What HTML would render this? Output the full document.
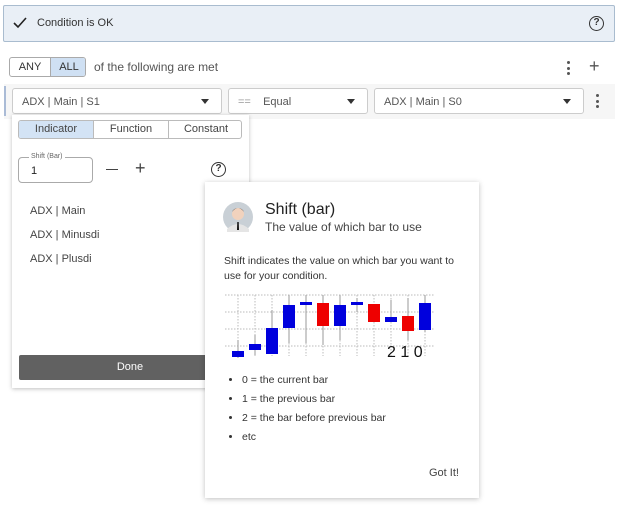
<!DOCTYPE html><html><head><style>
*{box-sizing:border-box}body{margin:0;width:619px;height:510px;background:#fff;font-family:"Liberation Sans",sans-serif;position:relative;overflow:hidden;color:#333}
.a{position:absolute}
.sel{position:absolute;border:1px solid #ccc;border-radius:3px;background:#fff;font-size:11px;color:#555;padding:7px 9px}
.car{position:absolute;right:12px;top:10px;width:0;height:0;border-left:4px solid transparent;border-right:4px solid transparent;border-top:5px solid #333}
.q{position:absolute;width:15px;height:15px;border:1.6px solid #333;border-radius:50%;font-size:10px;font-weight:bold;text-align:center;line-height:12px}
.dots{position:absolute;width:3px}
.dots i{display:block;width:3px;height:3px;background:#555;border-radius:50%;margin-bottom:2.5px}
</style></head><body>
<div class="a" style="left:3px;top:5px;width:612px;height:37px;background:#e9eff6;border:1px solid #a9bccf;border-radius:2px"></div>
<svg class="a" style="left:13px;top:17px" width="14" height="12"><path d="M1 6 L5 10 L13 1" stroke="#222" stroke-width="1.6" fill="none"/></svg>
<div class="a" style="left:37px;top:17px;font-size:11px;color:#333">Condition is OK</div>
<div class="q" style="left:589px;top:16px">?</div>

<div class="a" style="left:9px;top:57px;width:77px;height:20px;border:1px solid #aaa;border-radius:3px;overflow:hidden;font-size:11px">
<div class="a" style="left:0;top:0;width:40px;height:18px;line-height:18px;text-align:center;color:#333">ANY</div>
<div class="a" style="left:40px;top:0;width:37px;height:18px;line-height:18px;text-align:center;background:#cfe0f3;border-left:1px solid #aaa;color:#333">ALL</div></div>
<div class="a" style="left:94px;top:60px;font-size:12px;color:#555">of the following are met</div>
<div class="dots" style="left:567px;top:61px"><i></i><i></i><i></i></div>
<div class="a" style="left:589px;top:56px;font-size:18px;color:#555">+</div>

<div class="a" style="left:4px;top:84px;width:611px;height:35px;background:#f6f6f6"></div>
<div class="a" style="left:4px;top:86px;width:2px;height:30px;background:#aabbd6"></div>
<div class="sel" style="left:12px;top:88px;width:210px;height:26px">ADX | Main | S1<div class="car"></div></div>
<div class="sel" style="left:228px;top:88px;width:140px;height:26px"><span style="color:#999">==</span>&nbsp;&nbsp;&nbsp;&nbsp;Equal<div class="car"></div></div>
<div class="sel" style="left:374px;top:88px;width:210px;height:26px">ADX | Main | S0<div class="car"></div></div>
<div class="dots" style="left:596px;top:94px"><i></i><i></i><i></i></div>

<div class="a" style="left:12px;top:115px;width:237px;height:273px;background:#fff;box-shadow:0 1px 4px rgba(0,0,0,.25)"></div>
<div class="a" style="left:18px;top:120px;width:224px;height:19px;border:1px solid #bbb;border-radius:3px;overflow:hidden;font-size:11px;color:#444">
<div class="a" style="left:0;width:74px;height:17px;line-height:17px;text-align:center;background:#d3e3f5">Indicator</div>
<div class="a" style="left:74px;width:75px;height:17px;line-height:17px;text-align:center;border-left:1px solid #bbb">Function</div>
<div class="a" style="left:149px;width:75px;height:17px;line-height:17px;text-align:center;border-left:1px solid #bbb">Constant</div></div>
<div class="a" style="left:18px;top:157px;width:75px;height:26px;border:1px solid #aaa;border-radius:4px"></div>
<div class="a" style="left:29px;top:153px;font-size:7px;color:#666;background:#fff;padding:0 2px">Shift (Bar)</div>
<div class="a" style="left:31px;top:165px;font-size:11px;color:#222">1</div>
<div class="a" style="left:106px;top:169px;width:12px;height:1px;background:#444"></div>
<div class="a" style="left:135px;top:158px;font-size:18px;color:#444">+</div>
<div class="q" style="left:211px;top:162px">?</div>
<div class="a" style="left:30px;top:199px;font-size:11px;color:#444;line-height:24px">ADX | Main<br>ADX | Minusdi<br>ADX | Plusdi</div>
<div class="a" style="left:19px;top:355px;width:222px;height:25px;background:#616161;border-radius:2px;color:#fff;font-size:11px;text-align:center;line-height:25px">Done</div>

<div class="a" style="left:205px;top:182px;width:274px;height:316px;background:#fff;box-shadow:0 1px 5px rgba(0,0,0,.25)"></div>
<svg class="a" style="left:222px;top:201px" width="32" height="32"><circle cx="16" cy="16" r="15" fill="#c9d0d6"/><circle cx="16" cy="13" r="6" fill="#f1d2bd"/><path d="M10 11 Q16 3 22 11 Q20 7 16 7 Q12 7 10 11Z" fill="#3a3a3a"/><path d="M5 28 Q16 18 27 28 L27 31 L5 31Z" fill="#e5e5e5"/><path d="M15.3 21 L16.7 21 L17 29 L15 29Z" fill="#111"/></svg>
<div class="a" style="left:265px;top:201px;font-size:16px;color:#222">Shift (bar)</div>
<div class="a" style="left:265px;top:220px;font-size:12px;color:#444">The value of which bar to use</div>
<div class="a" style="left:224px;top:254px;font-size:10.5px;color:#333;line-height:15px;width:245px">Shift indicates the value on which bar you want to use for your condition.</div>
<svg class="a" style="left:220px;top:290px" width="220" height="72">
<g stroke="#bbb" stroke-width="1" stroke-dasharray="1.5,1.5">
<line x1="5" y1="5" x2="215" y2="5"/><line x1="5" y1="22" x2="215" y2="22"/><line x1="5" y1="39" x2="215" y2="39"/><line x1="5" y1="56" x2="215" y2="56"/>
<line x1="18" y1="5" x2="18" y2="66"/><line x1="35" y1="5" x2="35" y2="66"/><line x1="52" y1="5" x2="52" y2="66"/><line x1="69" y1="5" x2="69" y2="66"/><line x1="86" y1="5" x2="86" y2="66"/><line x1="103" y1="5" x2="103" y2="66"/><line x1="120" y1="5" x2="120" y2="66"/><line x1="137" y1="5" x2="137" y2="66"/><line x1="154" y1="5" x2="154" y2="66"/><line x1="171" y1="5" x2="171" y2="66"/><line x1="188" y1="5" x2="188" y2="66"/><line x1="205" y1="5" x2="205" y2="66"/>
</g>
<g stroke="#999" stroke-width="1">
<line x1="52" y1="20" x2="52" y2="64"/><line x1="69" y1="5" x2="69" y2="53"/><line x1="86" y1="5" x2="86" y2="53"/><line x1="103" y1="5" x2="103" y2="55"/><line x1="120" y1="5" x2="120" y2="50"/><line x1="137" y1="8" x2="137" y2="22"/><line x1="171" y1="10" x2="171" y2="30"/><line x1="188" y1="8" x2="188" y2="50"/><line x1="205" y1="5" x2="205" y2="42"/><line x1="18" y1="50" x2="18" y2="68"/><line x1="35" y1="45" x2="35" y2="65"/>
</g>
<g fill="#0000dd"><rect x="12" y="61" width="12" height="6"/><rect x="29" y="54" width="12" height="6"/><rect x="46" y="38" width="12" height="26"/><rect x="63" y="15" width="12" height="23"/><rect x="80" y="12" width="12" height="3"/><rect x="114" y="15" width="12" height="21"/><rect x="131" y="12" width="12" height="3"/><rect x="165" y="27" width="12" height="5"/><rect x="199" y="13" width="12" height="27"/></g>
<g fill="#ee0000"><rect x="97" y="13" width="12" height="23"/><rect x="148" y="14" width="12" height="18"/><rect x="182" y="26" width="12" height="15"/></g>
<text x="167" y="67" font-family="Liberation Sans" font-size="16" fill="#111">2 1 0</text>
</svg>
<ul class="a" style="left:224px;top:371px;margin:0;padding-left:18px;font-size:10.5px;color:#333;line-height:19px">
<li>0 = the current bar</li><li>1 = the previous bar</li><li>2 = the bar before previous bar</li><li>etc</li></ul>
<div class="a" style="left:429px;top:467px;font-size:11px;color:#444">Got It!</div>
</body></html>
